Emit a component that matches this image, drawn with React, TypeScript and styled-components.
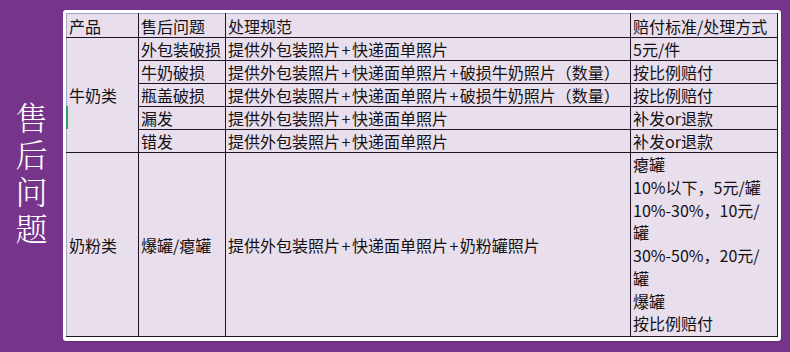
import { FC } from 'react';
import styled, { createGlobalStyle } from 'styled-components';

const GlobalStyle = createGlobalStyle`
  html, body {
    margin: 0;
    padding: 0;
    background: #76358b;
  }
`;

const Page = styled.div`
  display: flex;
  width: 790px;
  height: 352px;
  padding-top: 10px;
  box-sizing: border-box;
  background: #76358b;
  font-family: 'Noto Sans CJK SC', 'Noto Sans', sans-serif;
`;

const SideTitle = styled.div`
  width: 63px;
  height: 331px;
  display: flex;
  align-items: center;
  justify-content: center;
`;

const SideText = styled.h1`
  margin: 0;
  writing-mode: vertical-rl;
  color: #ffffff;
  font-family: 'Noto Serif CJK SC', 'Noto Sans CJK SC', serif;
  font-weight: 300;
  font-size: 32px;
  line-height: 32px;
  letter-spacing: 5px;
`;

const Panel = styled.div`
  position: relative;
  width: 718px;
  height: 331px;
  box-sizing: border-box;
  padding: 3px 3px 4px 3px;
  background: #ffffff;
  border-radius: 3px;
  box-shadow: 1px 1px 1px rgba(0, 0, 0, 0.15);

  &::after {
    content: '';
    position: absolute;
    left: 3px;
    top: 96px;
    width: 2px;
    height: 23px;
    background: #2e9f72;
  }
`;

const Table = styled.table`
  width: 712px;
  border-collapse: collapse;
  table-layout: fixed;
  background: #e9dfec;
  color: #141014;
  font-size: 16px;
  border-top: 1px solid #a9a4c6;
  border-left: 1px solid #a9a4c6;
`;

const Row = styled.tr<{ $h?: number }>`
  height: ${(p) => p.$h ?? 23}px;
`;

const Cell = styled.td<{ $top?: boolean }>`
  padding: 0 0 0 2px;
  border: 1px solid #1f1425;
  line-height: 22px;
  white-space: nowrap;
  vertical-align: ${(p) => (p.$top ? 'top' : 'middle')};
  overflow: hidden;

  table tr:first-child > & {
    border-top-color: #a9a4c6;
  }
  &:first-child {
    border-left-color: #a9a4c6;
  }
`;

const Plus = styled.span`
  margin: 0 1.5px;
`;

const Lines = styled.div`
  display: flex;
  flex-direction: column;
  line-height: 22.75px;
`;

// 处理规范里的"+"比正文稍宽一点，单独包一下
const Rule: FC<{ text: string }> = ({ text }) => (
  <>
    {text.split('+').map((part, i) => (
      <span key={i}>
        {i > 0 && <Plus>+</Plus>}
        {part}
      </span>
    ))}
  </>
);

const milkRows = [
  { issue: '外包装破损', rule: '提供外包装照片+快递面单照片', pay: '5元/件' },
  { issue: '牛奶破损', rule: '提供外包装照片+快递面单照片+破损牛奶照片（数量）', pay: '按比例赔付' },
  { issue: '瓶盖破损', rule: '提供外包装照片+快递面单照片+破损牛奶照片（数量）', pay: '按比例赔付' },
  { issue: '漏发', rule: '提供外包装照片+快递面单照片', pay: '补发or退款' },
  { issue: '错发', rule: '提供外包装照片+快递面单照片', pay: '补发or退款' },
];

const powderPay = ['瘪罐', '10%以下，5元/罐', '10%-30%，10元/', '罐', '30%-50%，20元/', '罐', '爆罐', '按比例赔付'];

const App: FC = () => (
  <>
    <GlobalStyle />
    <Page>
      <SideTitle>
        <SideText>售后问题</SideText>
      </SideTitle>
      <Panel>
        <Table>
          <colgroup>
            <col style={{ width: 72 }} />
            <col style={{ width: 87 }} />
            <col style={{ width: 405 }} />
            <col />
          </colgroup>
          <tbody>
            <Row $h={24}>
              <Cell>产品</Cell>
              <Cell>售后问题</Cell>
              <Cell>处理规范</Cell>
              <Cell>赔付标准/处理方式</Cell>
            </Row>
            {milkRows.map((r, i) => (
              <Row key={r.issue}>
                {i === 0 && <Cell rowSpan={milkRows.length}>牛奶类</Cell>}
                <Cell>{r.issue}</Cell>
                <Cell>
                  <Rule text={r.rule} />
                </Cell>
                <Cell>{r.pay}</Cell>
              </Row>
            ))}
            <Row $h={184}>
              <Cell>奶粉类</Cell>
              <Cell>爆罐/瘪罐</Cell>
              <Cell>
                <Rule text='提供外包装照片+快递面单照片+奶粉罐照片' />
              </Cell>
              <Cell $top>
                <Lines>
                  {powderPay.map((t, i) => (
                    <span key={i}>{t}</span>
                  ))}
                </Lines>
              </Cell>
            </Row>
          </tbody>
        </Table>
      </Panel>
    </Page>
  </>
);

export default App;
